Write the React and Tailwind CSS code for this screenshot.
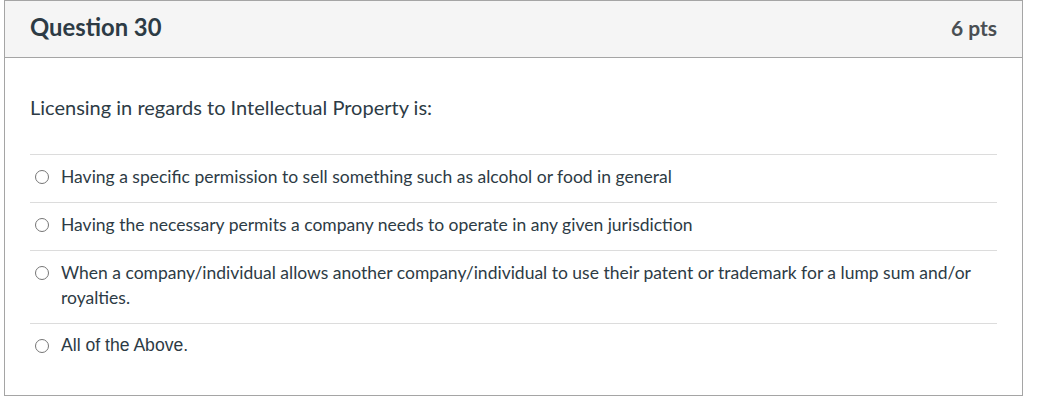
import React from "react";

const options = [
  { text: "Having a specific permission to sell something such as alcohol or food in general" },
  { text: "Having the necessary permits a company needs to operate in any given jurisdiction" },
  {
    text: "When a company/individual allows another company/individual to use their patent or trademark for a lump sum and/or royalties.",
  },
  { text: "All of the Above.", arial: true },
];

const App = () => {
  return (
    <div className="w-[1037px] h-[407px] bg-white pl-[4px]" style={{ fontFamily: "Lato, 'Noto Sans', sans-serif" }}>
      <div className="w-[1019px] h-[396px] border border-[#a5a5a5] text-[#2d3b45]">
        <div className="h-[57px] bg-[#f5f5f5] border-b border-[#a5a5a5] flex items-center justify-between px-[25px] pb-[3px]">
          <h2 className="text-[23.8px] font-bold">Question 30</h2>
          <span className="text-[21px] font-bold text-[#4a4f53]">6 pts</span>
        </div>
        <div className="px-[25px] pt-[36px]">
          <p className="text-[20px] leading-[27px]">Licensing in regards to Intellectual Property is:</p>
          <div className="mt-[33px]">
            {options.map((o, i) => (
              <div key={i} className="flex border-t border-[#dcdcdc] pt-[9px] pb-[13px] pr-[20px]">
                <div className="w-[31px] shrink-0 flex pt-[6px] pl-[5px]">
                  <span className="w-[14px] h-[14px] rounded-full border border-[#767676] bg-white"></span>
                </div>
                <span
                  className="text-[17.5px] leading-[25px]"
                  style={o.arial ? { fontFamily: "'Liberation Sans', Arial, sans-serif", fontSize: "17.6px" } : undefined}
                >
                  {o.text}
                </span>
              </div>
            ))}
          </div>
        </div>
      </div>
    </div>
  );
};

export default App;
